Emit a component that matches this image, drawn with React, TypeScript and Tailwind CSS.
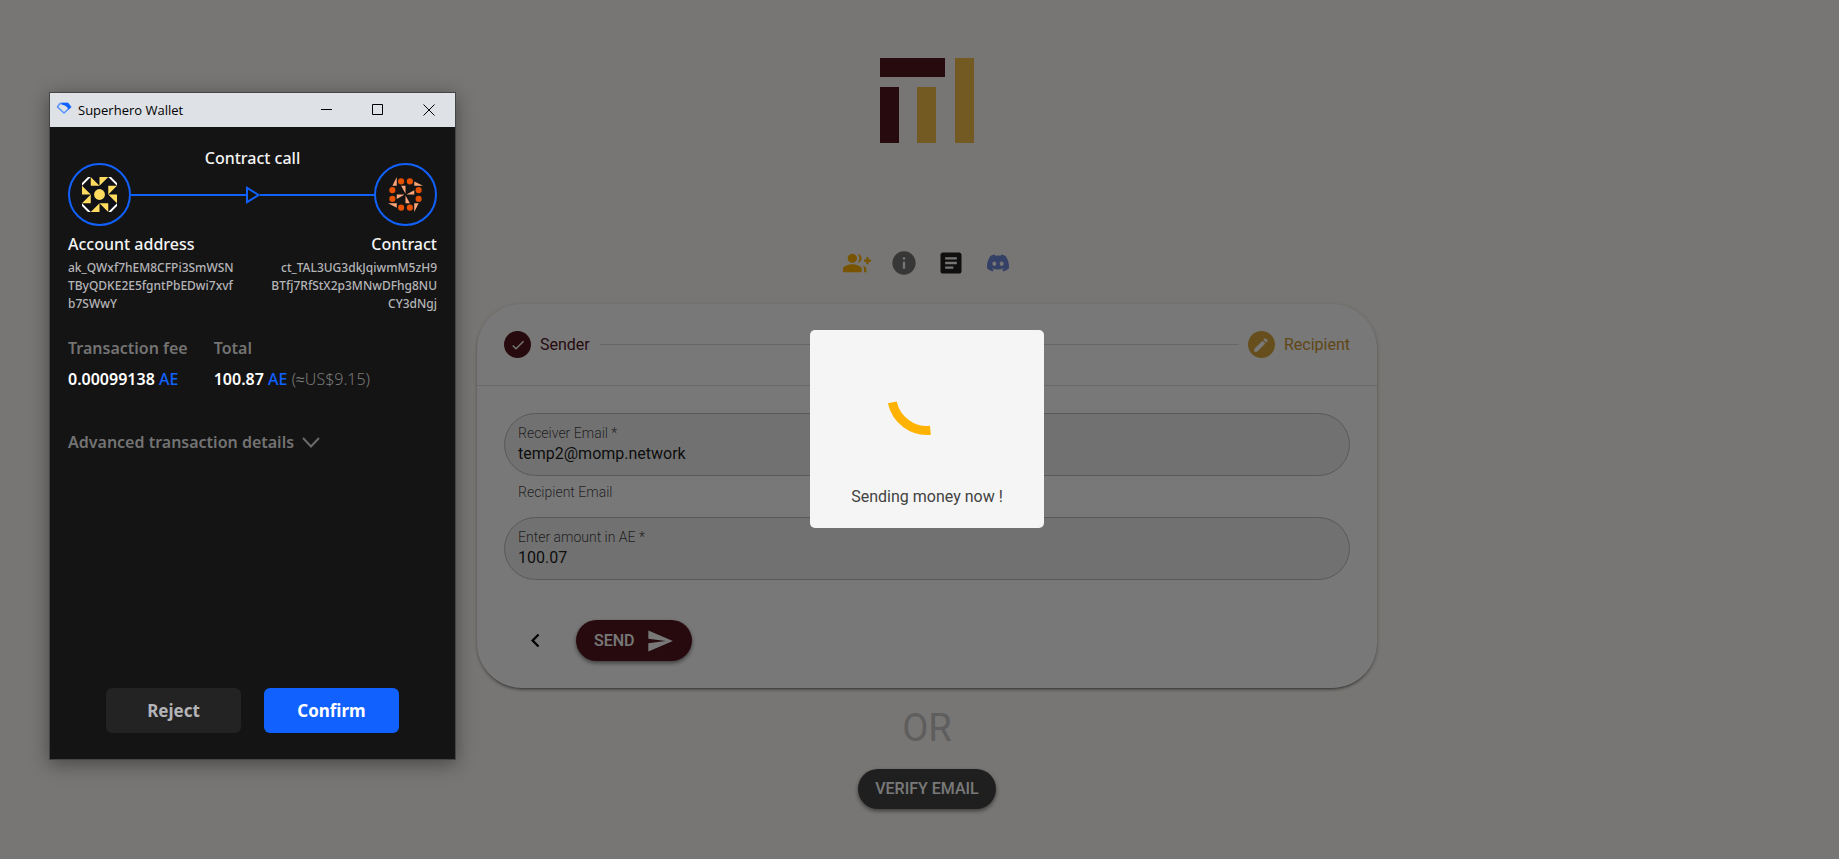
import type { ReactNode } from 'react';
import { FaDiscord } from 'react-icons/fa';
import { MdArticle, MdCheck, MdChevronLeft, MdEdit, MdGroupAdd, MdInfo, MdSend } from 'react-icons/md';

const quarterTurns = [0, 90, 180, 270];

function Logo() {
  return (
    <svg viewBox="0 0 94 85" className="w-[94px] h-[85px]" role="img" aria-label="MOMP">
      <path d="M0 0h65v19H0zM0 29h19v56H0z" fill="#53171f" />
      <path d="M37 29h19v56H37zM75 0h19v85H75z" fill="#f4bf4c" />
    </svg>
  );
}

function AccountAvatar() {
  return (
    <svg viewBox="0 0 4 4" className="w-[35px] h-[35px]" aria-hidden="true">
      <path d="M.7 0h2.6L4 .7v2.6L3.3 4H.7L0 3.3V.7z" fill="#0f1116" />
      {quarterTurns.map((angle) => (
        <g key={angle} transform={`rotate(${angle} 2 2)`}>
          <path d="M0 .68L.68 0H1L0 1z" fill="#fff" />
          <path d="M1 0v1h1zM2 0h1L2 1z" fill="#ffdc60" />
        </g>
      ))}
      <circle cx="2" cy="2" r=".62" fill="#ffdc60" />
    </svg>
  );
}

function ContractAvatar() {
  return (
    <svg viewBox="0 0 4 4" className="w-[35px] h-[35px]" aria-hidden="true">
      {quarterTurns.map((angle) => (
        <g key={angle} transform={`rotate(${angle} 2 2)`}>
          <path d="M1 0v1H.5zM1.5 1H2v.9z" fill="#ffa67a" />
          <circle cx="1.5" cy=".5" r=".35" fill="#e65100" />
          <circle cx="2.5" cy=".5" r=".35" fill="#e65100" />
        </g>
      ))}
    </svg>
  );
}

function Avatar({ children }: { children: ReactNode }) {
  return (
    <div className="size-[63px] shrink-0 rounded-full border-2 border-[#1161fe] flex items-center justify-center">
      {children}
    </div>
  );
}

function WalletWindow() {
  return (
    <section className="absolute left-[49px] top-[92px] w-[407px] h-[668px] flex flex-col border border-[#454545] bg-[#141414] font-['Noto_Sans',sans-serif] shadow-[0_4px_18px_rgba(0,0,0,0.4)]">
      {/* Title bar */}
      <header className="h-[34px] shrink-0 flex items-center pr-px bg-[#dee1e6] text-black">
        <svg viewBox="0 0 16 13" className="w-4 h-[13px] ml-1.5 -mt-1" fill="none" aria-hidden="true">
          <path d="M4 1.5h7.5L14.5 5 8 11 1.5 5z" stroke="#5b94f7" strokeWidth="1.6" strokeLinejoin="round" />
          <path d="M5.5.8H12L15.4 5l-3 2.8C12 5.300 9.500 3.200 5.5 2.600z" fill="#1161fe" />
        </svg>
        <h2 className="ml-1.5 flex-1 pt-0.5 text-[13px] font-['Open_Sans',sans-serif]">Superhero Wallet</h2>
        <button aria-label="Minimize" className="w-[51px] h-full flex items-center justify-center">
          <svg viewBox="0 0 12 12" className="size-3" aria-hidden="true"><path d="M0 5h11v1H0z" /></svg>
        </button>
        <button aria-label="Maximize" className="w-[51px] h-full flex items-center justify-center">
          <svg viewBox="0 0 12 12" className="size-3" fill="none" stroke="#000" aria-hidden="true"><path d="M.5.5h10v10H.5z" /></svg>
        </button>
        <button aria-label="Close" className="w-[51px] h-full flex items-center justify-center">
          <svg viewBox="0 0 12 12" className="size-3" fill="none" stroke="#000" aria-hidden="true"><path d="M.5.5l11 11M11.5.5l-11 11" /></svg>
        </button>
      </header>

      <div className="flex-1 flex flex-col px-[18px] pt-[18px] pb-[26px] font-medium">
        <h1 className="text-center text-base leading-[26px] text-[#f5f5f5]">Contract call</h1>
        <div className="-mt-2 flex items-center">
          <Avatar><AccountAvatar /></Avatar>
          <div className="flex-1 flex items-center">
            <div className="flex-1 h-0.5 bg-[#1161fe]" />
            <svg viewBox="0 0 14 18" className="w-3.5 h-[18px]" fill="none" stroke="#1161fe" strokeWidth="2" aria-hidden="true">
              <path d="M1 1.8v14.4L12.5 9z" />
            </svg>
            <div className="flex-1 h-0.5 bg-[#1161fe]" />
          </div>
          <Avatar><ContractAvatar /></Avatar>
        </div>

        <div className="mt-1.5 flex justify-between">
          <div>
            <h3 className="text-base leading-6 text-[#f5f5f5]">Account address</h3>
            <p className="mt-[3px] text-xs leading-[18px] text-[#b4b4b8]">
              ak_QWxf7hEM8CFPi3SmWSN<br />TByQDKE2E5fgntPbEDwi7xvf<br />b7SWwY
            </p>
          </div>
          <div className="text-right">
            <h3 className="text-base leading-6 text-[#f5f5f5]">Contract</h3>
            <p className="mt-[3px] text-xs leading-[18px] text-[#b4b4b8]">
              ct_TAL3UG3dkJqiwmM5zH9<br />BTfj7RfStX2p3MNwDFhg8NU<br />CY3dNgj
            </p>
          </div>
        </div>

        <dl className="mt-[23px] flex gap-[26px]">
          <div>
            <dt className="text-base leading-6 font-semibold text-[#737373]">Transaction fee</dt>
            <dd className="mt-[7px] text-base leading-6 font-semibold text-white">
              0.00099138 <span className="font-medium text-[#1161fe]">AE</span>
            </dd>
          </div>
          <div>
            <dt className="text-base leading-6 font-semibold text-[#737373]">Total</dt>
            <dd className="mt-[7px] text-base leading-6 font-semibold text-white">
              100.87 <span className="font-medium text-[#1161fe]">AE</span>{' '}
              <span className="font-light text-[#787878]">(≈US$9.15)</span>
            </dd>
          </div>
        </dl>

        <button className="mt-[39px] flex items-center gap-2 self-start text-base leading-6 font-semibold text-[#737373]">
          Advanced transaction details
          <svg viewBox="0 0 18 11" className="w-[18px] h-[11px]" fill="none" stroke="#6a6a6a" strokeWidth="2" aria-hidden="true">
            <path d="M1 1l8 8.5L17 1" />
          </svg>
        </button>

        <div className="mt-auto flex justify-center gap-[23px]">
          <button className="w-[135px] h-[45px] rounded-md bg-[#232323] text-[17px] font-bold text-[#b4b4b8]">Reject</button>
          <button className="w-[135px] h-[45px] rounded-md bg-[#1161fe] text-[17px] font-bold text-white">Confirm</button>
        </div>
      </div>
    </section>
  );
}

function Field({ id, label, value }: { id: string; label: string; value: string }) {
  return (
    <div className="h-[63px] flex flex-col rounded-full border border-[#bdbdbd] bg-[#f0f0f0] px-[13px] pt-[9px]">
      <label htmlFor={id} className="text-sm leading-5 font-light text-black/75">{label}</label>
      <input id={id} defaultValue={value} className="h-[22px] w-full bg-transparent text-base leading-[22px] text-black/90 outline-none" />
    </div>
  );
}

function TransferCard() {
  return (
    <form className="mt-[27px] w-full max-w-[900px] rounded-[45px] bg-white shadow-[0_3px_2px_-2px_rgba(0,0,0,0.3),0_2px_3px_rgba(0,0,0,0.2),0_1px_5px_rgba(0,0,0,0.15)]">
      <div className="h-[82px] flex items-center px-[27px] border-b border-[#e0e0e0]">
        <span className="size-[27px] rounded-full bg-[#53171f] text-white flex items-center justify-center">
          <MdCheck className="size-4" />
        </span>
        <span className="ml-[9px] text-base text-[#53171f]">Sender</span>
        <div className="ml-2.5 mr-[9px] flex-1 h-px bg-[#d8d8d8]" />
        <span className="size-[27px] rounded-full bg-[#dca93e] text-white flex items-center justify-center">
          <MdEdit className="size-[18px]" />
        </span>
        <span className="ml-[9px] text-base text-[#cc9632]">Recipient</span>
      </div>

      <div className="p-[27px]">
        <Field id="receiver-email" label="Receiver Email *" value="temp2@momp.network" />
        <p className="h-[41px] px-[14px] pt-1.5 text-sm leading-5 font-light text-black/75">Recipient Email</p>
        <Field id="amount" label="Enter amount in AE *" value="100.07" />
        <div className="mt-10 flex items-center gap-5 pl-[11px]">
          <button type="button" aria-label="Back" className="size-[41px] flex items-center justify-center">
            <MdChevronLeft className="size-[27px]" />
          </button>
          <button
            type="button"
            className="h-[41px] px-[18px] flex items-center gap-[11px] rounded-full bg-[#53171f] text-base font-medium text-white shadow-[0_2px_4px_rgba(0,0,0,0.5)]"
          >
            SEND
            <MdSend className="size-7" />
          </button>
        </div>
      </div>
    </form>
  );
}

function SendingDialog() {
  return (
    <div className="absolute inset-0 flex items-start justify-center pl-[15px] pt-[330px] bg-black/53">
      <div role="dialog" aria-label="Sending money" className="w-[234px] h-[198px] flex flex-col items-center rounded-[5px] bg-[#f5f5f5] pt-[25px]">
        <svg viewBox="0 0 80 80" className="size-20" fill="none" aria-hidden="true">
          <path d="M5.3 47.4A35.5 35.5 0 0 0 43.4 75.3" stroke="#ffb300" strokeWidth="9" />
        </svg>
        <p className="mt-[50px] text-base leading-6 text-[#424242]">Sending money now !</p>
      </div>
    </div>
  );
}

export default function App() {
  return (
    <div className="relative min-h-screen overflow-hidden bg-[#fffbf6] font-[Roboto,sans-serif]">
      <main className="flex flex-col items-center pl-[15px] pt-[58px] pb-12">
        <Logo />
        <nav className="mt-[106px] flex gap-[19px]">
          <a href="#invite" aria-label="Invite"><MdGroupAdd className="size-7 text-[#ffb300]" /></a>
          <a href="#info" aria-label="Info"><MdInfo className="size-7 text-[#757575]" /></a>
          <a href="#docs" aria-label="Docs"><MdArticle className="size-7 text-[#212121]" /></a>
          <a href="#discord" aria-label="Discord" className="size-7 flex items-center justify-center">
            <FaDiscord className="size-6 text-[#7289da]" />
          </a>
        </nav>
        <TransferCard />
        <p className="mt-[18px] text-[38px] leading-[45px] text-[#c8c8c8]">OR</p>
        <button className="mt-[18px] h-10 px-[17px] rounded-full bg-[#424242] text-base font-medium text-white shadow-[0_2px_4px_rgba(0,0,0,0.5)]">
          VERIFY EMAIL
        </button>
      </main>
      <SendingDialog />
      <WalletWindow />
    </div>
  );
}
